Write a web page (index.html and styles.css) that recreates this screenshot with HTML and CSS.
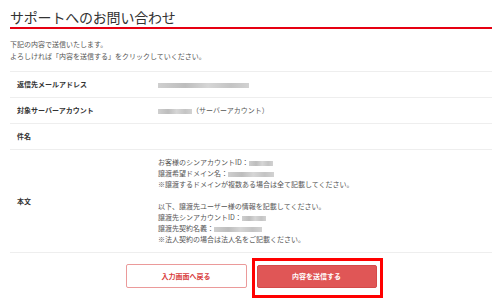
FILE: index.html
```html
<!DOCTYPE html>
<html lang="ja">
<head>
    <meta charset="UTF-8">
    <title>サポートへのお問い合わせ</title>
    <link rel="stylesheet" href="styles.css">
</head>
<body>
    <div class="page">
        <h1 class="page-title">サポートへのお問い合わせ</h1>

        <p class="lead">下記の内容で送信いたします。<br>よろしければ「内容を送信する」をクリックしていください。</p>

        <div class="confirm-table">
            <div class="row">
                <div class="label">返信先メールアドレス</div>
                <div class="value"><span class="masked w-mail"></span></div>
            </div>
            <div class="row">
                <div class="label">対象サーバーアカウント</div>
                <div class="value"><span class="masked w-acc"></span>（サーバーアカウント）</div>
            </div>
            <div class="row">
                <div class="label">件名</div>
                <div class="value"></div>
            </div>
            <div class="row">
                <div class="label">本文</div>
                <div class="value body-text">
                    <div>お客様のシンアカウントID：<span class="masked w-id"></span></div>
                    <div>譲渡希望ドメイン名：<span class="masked w-dom"></span></div>
                    <div>※譲渡するドメインが複数ある場合は全て記載してください。</div>
                    <div>&nbsp;</div>
                    <div>以下、譲渡先ユーザー様の情報を記載してください。</div>
                    <div>譲渡先シンアカウントID：<span class="masked w-id2"></span></div>
                    <div>譲渡先契約名義：<span class="masked w-name"></span></div>
                    <div>※法人契約の場合は法人名をご記載ください。</div>
                </div>
            </div>
        </div>

        <div class="actions">
            <button class="btn btn-back">入力画面へ戻る</button>
            <span class="highlight">
                <button class="btn btn-send">内容を送信する</button>
            </span>
        </div>
    </div>
</body>
</html>
```

FILE: styles.css
```css
* {
    margin: 0;
    padding: 0;
    box-sizing: border-box;
}
body {
    background: #ffffff;
    color: #555555;
    font-family: "Noto Sans CJK JP", "Noto Sans", sans-serif;
    font-size: 7px;
    width: 500px;
    height: 306px;
    overflow: hidden;
}
.page {
    padding: 0 8px 0 10px;
}
.page-title {
    margin-top: 7px;
    font-size: 14px;
    font-weight: 400;
    line-height: 20px;
    color: #333333;
    letter-spacing: -0.2px;
    border-bottom: 2px solid #e60012;
}
.lead {
    margin-top: 9px;
    line-height: 12px;
    color: #555555;
}
.confirm-table {
    margin-top: 9px;
    border-top: 1px solid #eeeeee;
}
.row {
    display: grid;
    grid-template-columns: 148px 1fr;
    align-items: center;
    border-bottom: 1px solid #eeeeee;
}
.label {
    padding-left: 7px;
    font-weight: bold;
    color: #333333;
    line-height: 11px;
}
.value {
    padding: 7px 0;
    min-height: 25px;
    line-height: 11px;
}
.masked {
    display: inline-block;
    height: 5px;
    vertical-align: middle;
    background: linear-gradient(90deg, #cfcfcf, #bdbdbd 30%, #d6d6d6 55%, #c4c4c4 80%, #d2d2d2);
    filter: blur(0.7px);
}
.w-mail { width: 91px; }
.w-acc { width: 34px; }
.w-id { width: 24px; }
.w-dom { width: 46px; }
.w-id2 { width: 24px; }
.w-name { width: 48px; }
.actions {
    margin-top: 11px;
    display: flex;
    justify-content: center;
    align-items: center;
    gap: 10px;
}
.btn {
    width: 121px;
    height: 24px;
    font-family: inherit;
    font-size: 7px;
    font-weight: bold;
    border-radius: 2px;
    cursor: pointer;
}
.btn-back {
    background: #ffffff;
    color: #d94040;
    border: 1px solid #eb9a9a;
}
.highlight {
    position: relative;
    display: inline-block;
}
.highlight::after {
    content: "";
    position: absolute;
    top: -7px;
    left: -5px;
    right: -6px;
    bottom: -10px;
    border: 3px solid #ff0000;
}
.btn-send {
    display: block;
    width: 120px;
    height: 23px;
    background: #e05656;
    color: #ffffff;
    border: 1px solid #d54a4a;
}
```
